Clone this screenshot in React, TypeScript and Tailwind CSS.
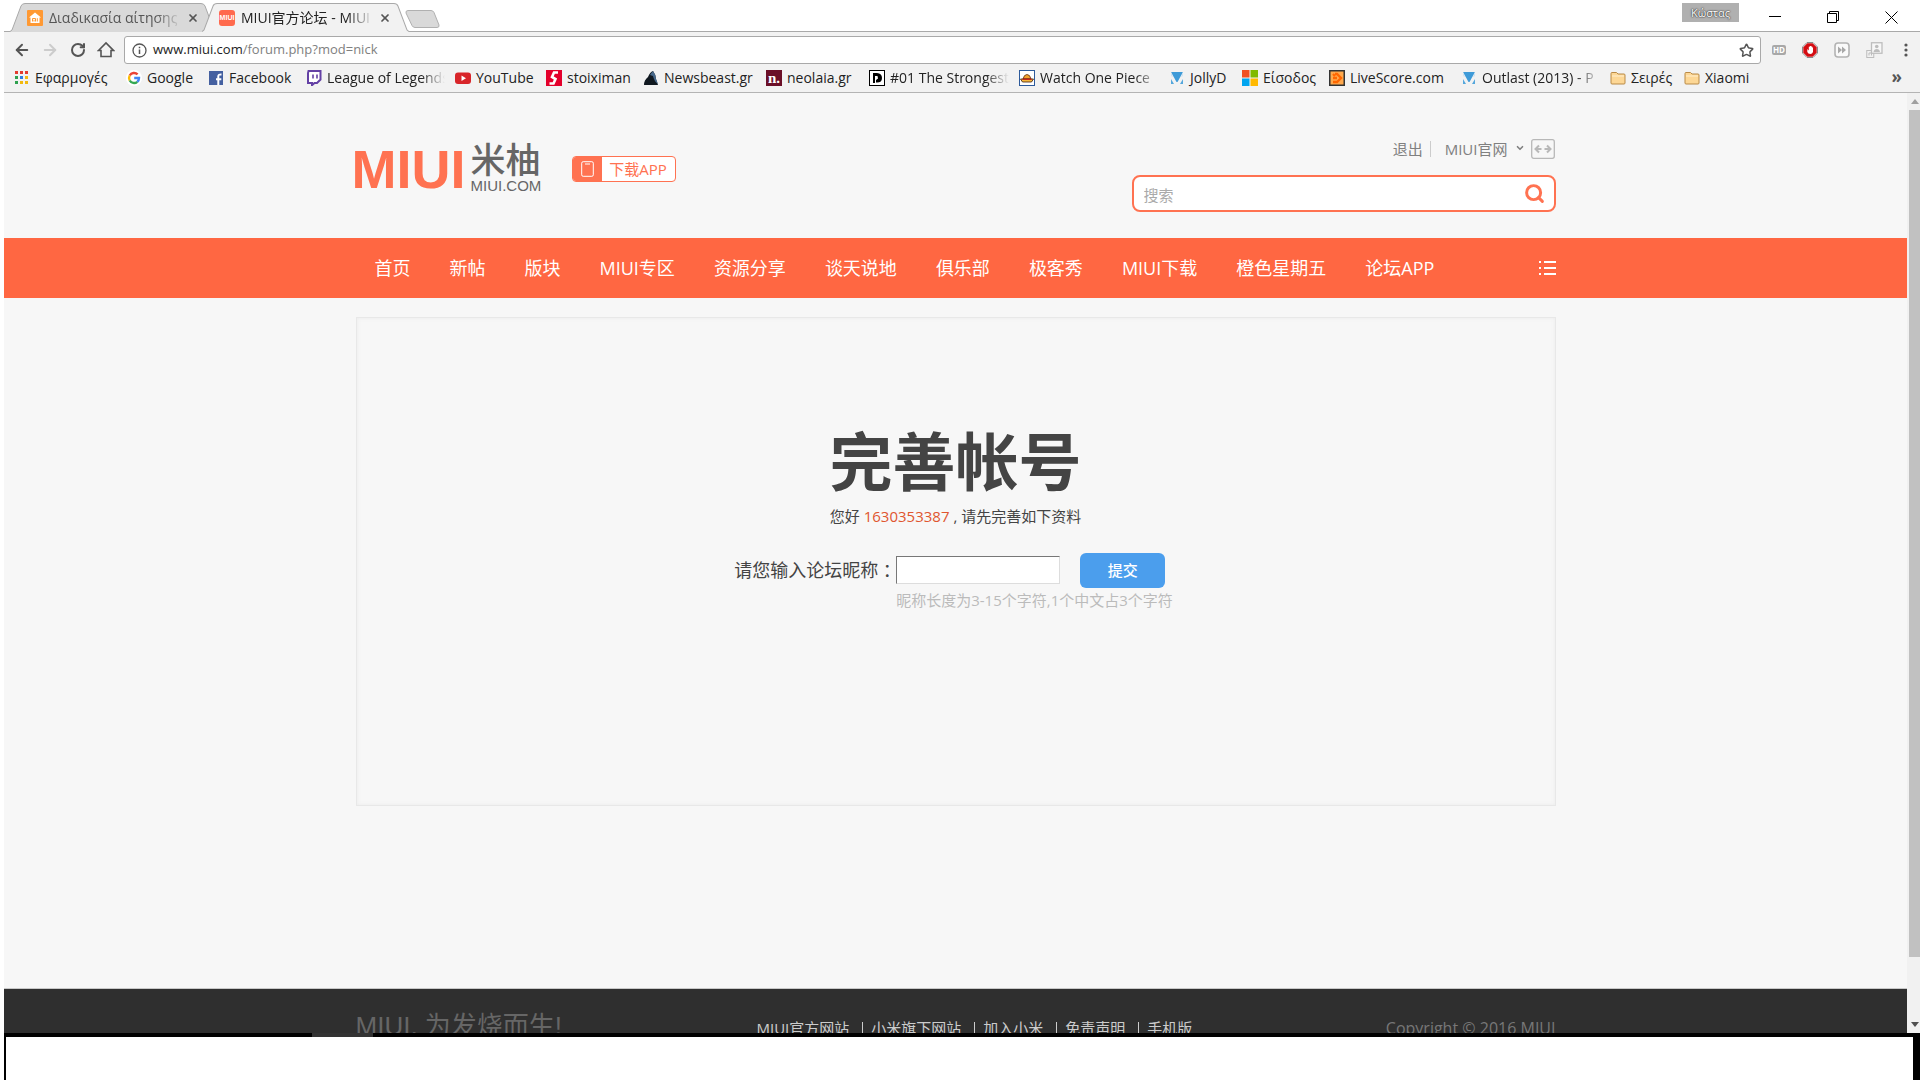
import type { ReactNode } from "react";
import { ArrowLeft, ArrowRight, RotateCw, Search, Star, X, ChevronDown } from "lucide-react";

const latin = "font-['Open_Sans','Noto_Sans_CJK_SC',sans-serif]";

function TabShape({ fill }: { fill: string }) {
  return (
    <svg className="absolute inset-0 h-full w-full" viewBox="0 0 206 29" preserveAspectRatio="none" aria-hidden="true">
      <path d="M0 28.5 L2 27 L11 3 Q12 .5 15 .5 H191 Q194 .5 195 3 L204 27 L206 28.5 V29 H0Z" fill={fill} />
      <path d="M0 28.5 L2 27 L11 3 Q12 .5 15 .5 H191 Q194 .5 195 3 L204 27 L206 28.5" fill="none" stroke="#a9a9a9" />
    </svg>
  );
}

function Tab({ icon, title, active }: { icon: ReactNode; title: string; active?: boolean }) {
  return (
    <div className={active ? "relative z-10 -ml-[14px] h-[29px] w-[207px]" : "relative h-[29px] w-[206px]"}>
      <TabShape fill={active ? "#f2f2f2" : "#d9d9d9"} />
      <div className="relative flex h-full items-center pl-[17px]">
        {icon}
        <button
          className={
            active
              ? "ml-[6px] w-[133px] overflow-hidden whitespace-nowrap text-left text-[14px] leading-5 text-[#222] [mask-image:linear-gradient(to_right,black_80%,transparent)]"
              : "ml-[6px] w-[133px] overflow-hidden whitespace-nowrap text-left text-[14px] leading-5 text-[#555] [mask-image:linear-gradient(to_right,black_80%,transparent)]"
          }
        >
          {title}
        </button>
        <button aria-label="Close tab" className="ml-[5px] text-[#555]">
          <X size={12} strokeWidth={3.5} />
        </button>
      </div>
    </div>
  );
}

function MiHouse() {
  return (
    <svg width="16" height="16" viewBox="0 0 16 16" className="shrink-0" aria-hidden="true">
      <rect width="16" height="16" rx="1" fill="#f93" />
      <path d="M8 2.5 L14 7.5 H12.5 V13 H3.5 V7.5 H2Z" fill="#fff" />
      <path d="M5.5 11.5 V8.5 H8.5 V11.5 M7 9.8 V11.5 M10.3 8.2 V11.5" stroke="#f93" fill="none" />
    </svg>
  );
}

function MiuiIcon() {
  return (
    <span className="flex h-4 w-4 shrink-0 items-center justify-center rounded-[3px] bg-[#ff6a4d] font-['Liberation_Sans',sans-serif] text-[7px] font-bold leading-none text-white">
      MIUI
    </span>
  );
}

const svg = { width: 16, height: 16, viewBox: "0 0 16 16", className: "shrink-0", "aria-hidden": true } as const;

const appColors = ["#e33b2e", "#e33b2e", "#e33b2e", "#2ea14f", "#2f7de1", "#f2b90f", "#2ea14f", "#f2b90f", "#f2b90f"];
const AppsIcon = () => (
  <svg {...svg}>
    {appColors.map((c, i) => (
      <rect key={i} x={1 + (i % 3) * 5} y={1 + Math.floor(i / 3) * 5} width="3" height="3" fill={c} />
    ))}
  </svg>
);
const GoogleIcon = () => (
  <svg {...svg}>
    <circle cx="8" cy="8" r="8" fill="#fff" />
    <g fill="none" strokeWidth="2.4">
      <path d="M11.6 4.4 A5 5 0 0 0 3.7 5.5" stroke="#ea4335" />
      <path d="M3.7 5.5 A5 5 0 0 0 3.7 10.5" stroke="#fbbc05" />
      <path d="M3.7 10.5 A5 5 0 0 0 11.3 11.8" stroke="#34a853" />
      <path d="M11.3 11.8 A5 5 0 0 0 13 8 H8.2" stroke="#4285f4" />
    </g>
  </svg>
);
const FacebookIcon = () => (
  <svg {...svg}>
    <rect x="1" y="1" width="14" height="14" fill="#4460a0" />
    <path d="M10.3 15 V9 M8 9.3 H13.3 M10.3 10 V6.2 Q10.3 4.2 13.5 4.4" stroke="#fff" strokeWidth="2" fill="none" />
  </svg>
);
const TwitchIcon = () => (
  <svg {...svg}>
    <path d="M2.5 1 H14.5 V9.5 L11 13 H8.5 L6 15.2 V13 H2 V3Z" fill="#fff" stroke="#6441a5" strokeWidth="2" />
    <path d="M7 4.5 V8.5 M11 4.5 V8.5" stroke="#6441a5" strokeWidth="1.6" />
  </svg>
);
const YoutubeIcon = () => (
  <svg {...svg}>
    <rect y="2.5" width="16" height="11.5" rx="3" fill="#d8252a" />
    <path d="M6.5 5.5 L11 8.2 L6.5 11Z" fill="#fff" />
  </svg>
);
const StoixIcon = () => (
  <svg {...svg}>
    <rect width="16" height="16" fill="#e4002b" />
    <path d="M12 2.5 H8 L6 7 L9.5 9 L7.5 13.5 H3.5" stroke="#fff" strokeWidth="2.6" fill="none" />
  </svg>
);
const BeastIcon = () => (
  <svg {...svg}>
    <path d="M1 15 Q1 10 5 7 Q7 2 10 1 Q13 5 13 9 L15 15Z" fill="#101820" />
    <path d="M7 5 Q9 2 10 1 Q13 5 13 9 L15 14 Q11 11 10 6Z" fill="#46688b" />
  </svg>
);
const NeolaiaIcon = () => (
  <span className="flex h-4 w-4 shrink-0 items-center justify-center bg-[#6b1028] font-['Liberation_Serif',serif] text-[15px] font-bold leading-none text-white">
    n.
  </span>
);
const DIcon = () => (
  <svg {...svg}>
    <rect x=".5" y=".5" width="15" height="15" fill="#fff" stroke="#000" />
    <path d="M4 3 H8 Q13 3.5 13 8 Q13 12.5 8 12.5 H7 V10 L9 8.5 L8.5 6 L6 6 V13 H4Z" fill="#000" />
  </svg>
);
const HatIcon = () => (
  <svg {...svg}>
    <rect x=".5" y=".5" width="15" height="15" fill="#fff" stroke="#2d5a9b" />
    <path d="M4 9 Q5 4.5 8 4.5 Q11 4.5 12 9Z" fill="#f3a32d" stroke="#5d2c0c" strokeWidth=".8" />
    <path d="M1.5 9 H14.5 L12.5 12 H3.5Z" fill="#f8b93c" stroke="#3a1a0a" strokeWidth=".8" />
    <path d="M3.5 9.3 H12.5" stroke="#c6271c" strokeWidth="1.4" />
  </svg>
);
const VIcon = () => (
  <svg {...svg}>
    <path d="M2 2 H14 L8.5 12 H7.5Z" fill="#3f9bd8" />
    <path d="M2 9 L5 14 H2Z M14 9 L11 14 H14Z" fill="#55a7dc" />
    <path d="M2 2 V6 L4 7Z M14 2 V6 L12 7Z" fill="#cfe4f3" />
  </svg>
);
const WindowsIcon = () => (
  <svg {...svg}>
    <path d="M0 0H7.5V7.5H0Z" fill="#f25022" />
    <path d="M8.5 0H16V7.5H8.5Z" fill="#7fba00" />
    <path d="M0 8.5H7.5V16H0Z" fill="#00a4ef" />
    <path d="M8.5 8.5H16V16H8.5Z" fill="#ffb900" />
  </svg>
);
const ScoreIcon = () => (
  <svg {...svg}>
    <rect x=".75" y=".75" width="14.5" height="14.5" fill="#ffa94d" stroke="#333" strokeWidth="1.5" />
    <path d="M4 4 L6 6 M6 4 H8 L12 8 L8 12 H4 M4 8 H8" stroke="#f60" strokeWidth="2.4" fill="none" />
  </svg>
);
const FolderIcon = () => (
  <svg {...svg}>
    <path d="M1 13 V3.5 Q1 2.5 2 2.5 H6.5 L8 4 H14 Q15 4 15 5 V13 Q15 14 14 14 H2 Q1 14 1 13Z" fill="#fdd795" stroke="#b98a46" />
    <path d="M2 6 H14" stroke="#ffefcf" />
  </svg>
);

const bookmarks: { icon: ReactNode; label: string; width: string; fade?: boolean }[] = [
  { icon: <AppsIcon />, label: "Εφαρμογές", width: "w-[112px]" },
  { icon: <GoogleIcon />, label: "Google", width: "w-[82px]" },
  { icon: <FacebookIcon />, label: "Facebook", width: "w-[98px]" },
  { icon: <TwitchIcon />, label: "League of Legends", width: "w-[149px]", fade: true },
  { icon: <YoutubeIcon />, label: "YouTube", width: "w-[91px]" },
  { icon: <StoixIcon />, label: "stoiximan", width: "w-[97px]" },
  { icon: <BeastIcon />, label: "Newsbeast.gr", width: "w-[123px]" },
  { icon: <NeolaiaIcon />, label: "neolaia.gr", width: "w-[103px]" },
  { icon: <DIcon />, label: "#01 The Strongest", width: "w-[150px]", fade: true },
  { icon: <HatIcon />, label: "Watch One Piece", width: "w-[150px]", fade: true },
  { icon: <VIcon />, label: "JollyD", width: "w-[73px]" },
  { icon: <WindowsIcon />, label: "Είσοδος", width: "w-[87px]" },
  { icon: <ScoreIcon />, label: "LiveScore.com", width: "w-[132px]" },
  { icon: <VIcon />, label: "Outlast (2013) - P", width: "w-[149px]", fade: true },
  { icon: <FolderIcon />, label: "Σειρές", width: "w-[74px]" },
  { icon: <FolderIcon />, label: "Xiaomi", width: "w-[90px]" },
];

function Browser() {
  return (
    <div className={`${latin} shrink-0`}>
      <div className="flex h-8 items-end justify-between border-b border-[#a9a9a9] bg-white pl-[6px]">
        <div className="-mb-px flex">
          <Tab icon={<MiHouse />} title="Διαδικασία αίτησης" />
          <Tab icon={<MiuiIcon />} title="MIUI官方论坛 - MIUI" active />
          <button aria-label="New tab" className="-ml-1 mb-1 self-end">
            <svg width="35" height="18" viewBox="0 0 35 18" aria-hidden="true">
              <path d="M3 .5 H26 Q28 .5 29 2.5 L34 15 Q34.500 17.500 32 17.500 H10 Q8 17.500 7 15.500 L1 3 Q.5 .5 3 .5Z" fill="#d9d9d9" stroke="#b0b0b0" />
            </svg>
          </button>
        </div>
        <div className="flex h-full items-start">
          <button className="mt-[3px] h-[19px] w-[57px] bg-[#b0b0b0] text-[11px] leading-[17px] text-white [text-shadow:0_0_2px_#222,0_0_1px_#222]">
            Κώστας
          </button>
          <button aria-label="Minimize" className="ml-[7px] flex h-8 w-[58px] items-center justify-center">
            <svg width="12" height="12" viewBox="0 0 12 12" aria-hidden="true">
              <path d="M0 6.500 H12" stroke="#000" />
            </svg>
          </button>
          <button aria-label="Restore" className="flex h-8 w-[58px] items-center justify-center pt-[2px]">
            <svg width="12" height="12" viewBox="0 0 12 12" fill="none" stroke="#000" aria-hidden="true">
              <path d="M.5 2.500 H9.500 V11.500 H.5Z M2.500 2.500 V.5 H11.500 V9.500 H9.500" />
            </svg>
          </button>
          <button aria-label="Close" className="flex h-8 w-[58px] items-center justify-center pt-[2px]">
            <svg width="13" height="13" viewBox="0 0 13 13" fill="none" stroke="#000" aria-hidden="true">
              <path d="M.5 .5 L12.500 12.500 M12.500 .5 L.5 12.500" />
            </svg>
          </button>
        </div>
      </div>
      <div className="flex h-9 items-center bg-[#f2f2f2] pl-2 pr-[10px] text-[#555]">
        <button aria-label="Back" className="w-7 pl-[1px]">
          <ArrowLeft size={18} strokeWidth={2.6} />
        </button>
        <button aria-label="Forward" className="w-7 pl-[1px] text-[#ccc]">
          <ArrowRight size={18} strokeWidth={2.6} />
        </button>
        <button aria-label="Reload" className="w-7 pl-[2px]">
          <RotateCw size={16} strokeWidth={3} />
        </button>
        <button aria-label="Home" className="w-7 pl-[1px]">
          <svg width="18" height="18" viewBox="0 0 18 18" fill="none" stroke="currentColor" strokeWidth="1.6" aria-hidden="true">
            <path d="M1.500 9.500 L9 2 L16.500 9.500 H14 V15.500 H4 V9.500Z" />
          </svg>
        </button>
        <div className="flex h-7 flex-1 items-center rounded-[3px] border border-[#a9a9a9] bg-white pl-[7px] pr-[6px]">
          <svg width="15" height="15" viewBox="0 0 15 15" fill="none" stroke="#555" aria-hidden="true">
            <circle cx="7.500" cy="7.500" r="6.500" strokeWidth="1.300" />
            <path d="M7.500 6.500 V11 M7.500 3.800 V5.300" strokeWidth="1.500" />
          </svg>
          <a href="http://www.miui.com/forum.php?mod=nick" className="ml-[6px] flex-1 text-[13px] text-[#808080]">
            <span className="text-[#222]">www.miui.com</span>/forum.php?mod=nick
          </a>
          <button aria-label="Bookmark this page">
            <Star size={15} strokeWidth={2.4} />
          </button>
        </div>
        <div className="ml-[11px] flex items-center gap-4">
          <button aria-label="HD" className="h-[10px] w-[14px] rounded-[2px] bg-[#a8a8a8] text-[8px] font-bold leading-[10px] text-white">
            HD
          </button>
          <button aria-label="Ad blocker">
            <svg width="16" height="16" viewBox="0 0 16 16" aria-hidden="true">
              <path d="M5 .5 H11 L15.500 5 V11 L11 15.500 H5 L.5 11 V5Z" fill="#fff" stroke="#8a8a8a" />
              <path d="M5.300 1.300 H10.700 L14.700 5.300 V10.700 L10.700 14.700 H5.300 L1.300 10.700 V5.300Z" fill="#d40d12" />
              <path d="M5.300 7 V10 Q6 12 8.300 12 Q10.300 12 11 10 V5.500 H10.200 V4.500 H9.200 V4 H7.800 V4.800 H6.800 V8.500Z" fill="#fff" />
            </svg>
          </button>
          <button aria-label="Fast forward">
            <svg width="16" height="16" viewBox="0 0 16 16" aria-hidden="true">
              <rect x="1" y="1" width="14" height="14" rx="3" fill="#fafafa" stroke="#b3b3b3" strokeWidth="1.600" />
              <path d="M4 4.500 L8 8 L4 11.500Z M8 4.500 L12 8 L8 11.500Z" fill="#a8a8a8" />
            </svg>
          </button>
          <button aria-label="Profiles">
            <svg width="17" height="16" viewBox="0 0 17 16" fill="none" stroke="#bdbdbd" aria-hidden="true">
              <rect x=".75" y="8.500" width="7" height="7" />
              <path d="M3 13.500 V11 H5.500 V13.500" />
              <rect x="5.500" y=".75" width="10.500" height="10.500" fill="#f7f7f7" strokeWidth="1.300" />
              <circle cx="10.750" cy="4.500" r="1.800" fill="#bdbdbd" stroke="none" />
              <path d="M7.500 10 Q8 7 10.750 7 Q13.500 7 14 10Z" fill="#bdbdbd" stroke="none" />
            </svg>
          </button>
          <button aria-label="Menu" className="ml-[3px]">
            <svg width="8" height="16" viewBox="0 0 8 16" fill="#555" aria-hidden="true">
              <circle cx="4" cy="3" r="1.600" />
              <circle cx="4" cy="8" r="1.600" />
              <circle cx="4" cy="13" r="1.600" />
            </svg>
          </button>
        </div>
      </div>
      <nav aria-label="Bookmarks" className="flex h-[25px] items-start border-b border-[#b4b4b4] bg-[#f2f2f2] pl-[10px] text-[14px] leading-5 text-[#222]">
        {bookmarks.map((b) => (
          <a key={b.label} href="#" className={`flex shrink-0 items-center gap-[5px] ${b.width}`}>
            {b.icon}
            <span
              className={
                b.fade
                  ? "mr-[10px] flex-1 overflow-hidden whitespace-nowrap [mask-image:linear-gradient(to_right,black_80%,transparent)]"
                  : "whitespace-nowrap"
              }
            >
              {b.label}
            </span>
          </a>
        ))}
        <button aria-label="More bookmarks" className="ml-auto mr-[18px] text-[17px] font-bold leading-[18px] text-[#555]">
          »
        </button>
      </nav>
    </div>
  );
}

const navItems = ["首页", "新帖", "版块", "MIUI专区", "资源分享", "谈天说地", "俱乐部", "极客秀", "MIUI下载", "橙色星期五", "论坛APP"];

function SiteHeader() {
  return (
    <header>
      <div className="mx-auto flex h-[145px] max-w-[1200px] items-start">
        <a href="#" className="mt-[49px] flex items-start" aria-label="MIUI 米柚">
          <span className="-ml-1 w-[119px] font-['Liberation_Sans',sans-serif] text-[54px] font-bold leading-[54px] text-[#ff7251]">
            MIUI
          </span>
          <span className="flex w-[70px] flex-col text-[#666]">
            <span className="font-['Noto_Sans_CJK_SC',sans-serif] text-[35px] font-medium leading-8">米柚</span>
            <span className="font-['Liberation_Sans',sans-serif] text-[15px] leading-6">MIUI.COM</span>
          </span>
        </a>
        <a href="#" className="ml-[31px] mt-[63px] flex h-[26px] overflow-hidden rounded border border-[#ff7251] bg-white text-[15px] leading-6 text-[#ff7251]">
          <span className="flex w-[29px] items-center justify-center bg-[#ff7251]">
            <svg width="13" height="16" viewBox="0 0 13 16" fill="none" stroke="#fff" aria-hidden="true">
              <rect x=".7" y=".7" width="11.600" height="14.600" rx="1.500" />
              <path d="M4 3 H9" />
            </svg>
          </span>
          <span className="w-[73px] text-center">下载APP</span>
        </a>
        <div className="ml-auto flex w-[424px] flex-col">
          <div className="mt-11 flex h-6 items-center justify-end pr-px text-[15px] text-[#808080]">
            <a href="#">退出</a>
            <span className="ml-[7px] h-4 w-px bg-[#ccc]" />
            <a href="#" className="ml-[14px]">MIUI官网</a>
            <ChevronDown size={10} strokeWidth={4} className="mb-[3px] ml-[7px]" />
            <button aria-label="切换宽度" className="ml-[6px]">
              <svg width="24" height="20" viewBox="0 0 24 20" fill="none" stroke="#b8b8b8" aria-hidden="true">
                <rect x=".7" y=".7" width="22.600" height="18.600" rx="2" strokeWidth="1.300" />
                <path d="M10.500 10 H5 M8 6.500 L4.500 10 L8 13.500 M13.500 10 H19 M16 6.500 L19.500 10 L16 13.500" strokeWidth="2" />
              </svg>
            </button>
          </div>
          <form className="mt-[14px] flex h-[37px] items-center rounded-lg border-2 border-[#ff7251] bg-white pl-[10px] pr-[9px]">
            <input aria-label="搜索" placeholder="搜索" className="min-w-0 flex-1 pt-[3px] text-[15px] outline-none placeholder:text-[#aaa]" />
            <button type="button" aria-label="搜索" className="text-[#ff7251]">
              <Search size={21} strokeWidth={3.4} />
            </button>
          </form>
        </div>
      </div>
      <nav aria-label="论坛导航" className="bg-[#ff6742]">
        <div className="mx-auto flex h-[60px] max-w-[1200px] items-center gap-[39px] pl-[19px] text-lg text-white">
          {navItems.map((n) => (
            <a key={n} href="#" className="whitespace-nowrap">
              {n}
            </a>
          ))}
          <button aria-label="更多" className="ml-auto">
            <svg width="17" height="16" viewBox="0 0 17 16" stroke="#fff" strokeWidth="2" aria-hidden="true">
              <path d="M0 2 H2 M5 2 H17 M0 8 H2 M5 8 H17 M0 14 H2 M5 14 H17" />
            </svg>
          </button>
        </div>
      </nav>
    </header>
  );
}

function NickForm() {
  return (
    <main className="mx-auto mb-[182px] mt-[19px] h-[489px] w-full max-w-[1200px] border border-[#e8e8e8] shadow-[inset_0_0_4px_#ececec]">
      <h1 className="mt-[106px] text-center text-[63px] font-bold leading-[74px] text-[#444]">完善帐号</h1>
      <p className="mt-[6px] text-center text-[15px] leading-6 text-[#444]">
        您好 <span className="text-[#e0562f]">1630353387</span> , 请先完善如下资料
      </p>
      <form className="mt-6 grid grid-cols-[auto_auto] justify-center pr-1 text-[#444]">
        <label htmlFor="nick" className="flex items-center text-lg leading-9">
          请您输入论坛昵称<span className="font-['Noto_Sans_CJK_TC',sans-serif]">：</span>
        </label>
        <div className="flex items-center gap-5">
          <input
            id="nick"
            className="h-7 w-[164px] border border-b-[#ddd] border-l-[#777] border-r-[#ddd] border-t-[#777] bg-white px-1 outline-none"
          />
          <button type="button" className="h-[35px] w-[85px] rounded-md bg-[#4b9eed] text-[15px] font-medium text-white">
            提交
          </button>
        </div>
        <p className="col-start-2 text-[15px] leading-6 text-[#bbb]">昵称长度为3-15个字符,1个中文占3个字符</p>
      </form>
    </main>
  );
}

const footerLinks = ["MIUI官方网站", "小米旗下网站", "加入小米", "免责声明", "手机版"];

function SiteFooter() {
  return (
    <footer className="border-t border-[#c8c8c8] bg-[#2f2f2f]">
      <div className="mx-auto grid h-40 max-w-[1200px] grid-cols-[401px_1fr_auto] items-start">
        <p className="mt-[19px] font-['Liberation_Sans','Noto_Sans_CJK_SC',sans-serif] text-[26px] leading-9 text-[#666]">
          MIUI, 为发烧而生!
        </p>
        <ul className="mt-[27px] flex text-[15px] leading-6 text-[#ccc]">
          {footerLinks.map((l, i) => (
            <li key={l} className="flex items-center">
              {i > 0 && <span className="ml-[13px] mr-2 h-3 w-px bg-[#ccc]" />}
              <a href="#">{l}</a>
            </li>
          ))}
        </ul>
        <p className="mt-[27px] text-[16px] leading-6 text-[#777]">Copyright © 2016 MIUI</p>
      </div>
    </footer>
  );
}

function Scrollbar() {
  return (
    <div className="flex w-[13px] shrink-0 flex-col items-center bg-[#f1f1f1] py-[6px] pl-[2px]" aria-hidden="true">
      <svg width="8" height="5" viewBox="0 0 8 5">
        <path d="M0 5 L4 0 L8 5Z" fill="#a0a0a0" />
      </svg>
      <div className="mt-[6px] w-full flex-[847] bg-[#c1c1c1]" />
      <div className="flex-[65]" />
      <svg width="8" height="5" viewBox="0 0 8 5">
        <path d="M0 0 L4 5 L8 0Z" fill="#505050" />
      </svg>
    </div>
  );
}

export default function App() {
  return (
    <div className="flex h-screen flex-col overflow-hidden bg-white pl-1">
      <Browser />
      <div className="flex min-h-0 flex-1">
        <div className={`${latin} min-w-0 flex-1 overflow-hidden bg-[#f7f7f7]`}>
          <SiteHeader />
          <NickForm />
          <SiteFooter />
        </div>
        <Scrollbar />
      </div>
      <div className="shrink-0 bg-black pl-[2px] pr-[7px]">
        <div className="ml-[306px] h-1 w-[61px] bg-[#333]" />
        <div className="h-[43px] bg-white" />
      </div>
    </div>
  );
}
